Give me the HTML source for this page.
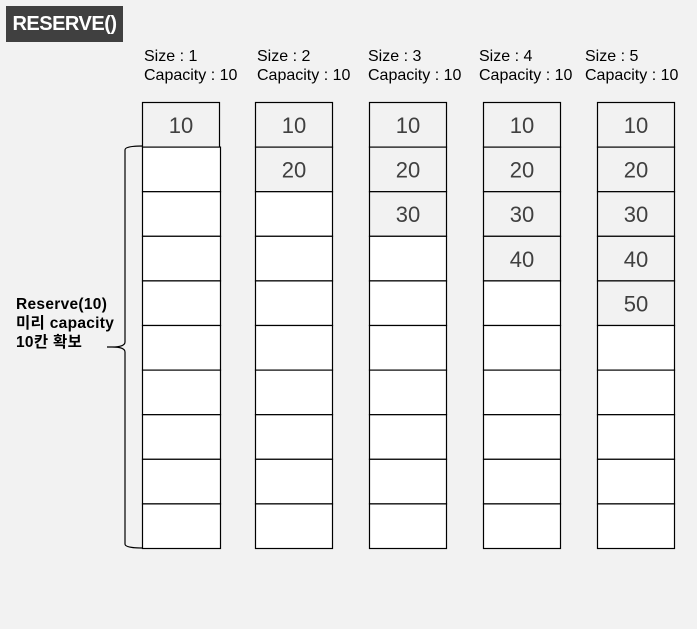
<!DOCTYPE html>
<html><head><style>
body{margin:0;width:697px;height:629px;background:#f2f2f2;position:relative;overflow:hidden;font-family:"Liberation Sans","Noto Sans CJK KR",sans-serif}
.t{position:absolute;left:6px;top:6px;width:117px;height:36px;background:#404040;color:#fff;font-weight:bold;font-size:20px;line-height:36px;text-align:center;letter-spacing:-0.5px}
.l{position:absolute;font-size:16px;line-height:19px;color:#000}
.n{position:absolute;font-weight:bold;font-size:15.5px;line-height:19px;left:16px;top:295px;letter-spacing:0.3px}
</style></head><body>
<div class="t">RESERVE()</div>
<div class="l" style="left:144px;top:47px">Size : 1<br>Capacity : 10</div>
<div class="l" style="left:257px;top:47px">Size : 2<br>Capacity : 10</div>
<div class="l" style="left:368px;top:47px">Size : 3<br>Capacity : 10</div>
<div class="l" style="left:479px;top:47px">Size : 4<br>Capacity : 10</div>
<div class="l" style="left:585px;top:47px">Size : 5<br>Capacity : 10</div>
<div class="n">Reserve(10)<br>미리 capacity<br>10칸 확보</div>
<svg width="697" height="629" style="position:absolute;left:0;top:0" font-family="Liberation Sans, sans-serif">
<path d="M142.5 146 Q125 146 125 150 L125 342 Q125 347 112 347 L107 347 M112 347 Q125 347 125 352 L125 544 Q125 548 142.5 548" fill="none" stroke="#000" stroke-width="1.2"/>
<script>
var svg=document.currentScript.parentNode;var ns="http://www.w3.org/2000/svg";
var xs=[142,255,369,483,597];var vals=["10","20","30","40","50"];
for(var c=0;c<5;c++){for(var i=0;i<10;i++){var y=102+i*44.6;var r=document.createElementNS(ns,"rect");
var w=(c==0&&i>0)?78:77;
r.setAttribute("x",xs[c]+0.5);r.setAttribute("y",y+0.5);r.setAttribute("width",w);r.setAttribute("height",44.6);
r.setAttribute("fill",i<=c?"#f2f2f2":"#fff");r.setAttribute("stroke","#000");r.setAttribute("stroke-width","1.2");svg.appendChild(r);
if(i<=c){var t=document.createElementNS(ns,"text");t.setAttribute("x",xs[c]+39);t.setAttribute("y",y+31);t.setAttribute("text-anchor","middle");t.setAttribute("font-size","22");t.setAttribute("fill","#404040");t.textContent=vals[i];svg.appendChild(t);}}}
</script>
</svg>
</body></html>
